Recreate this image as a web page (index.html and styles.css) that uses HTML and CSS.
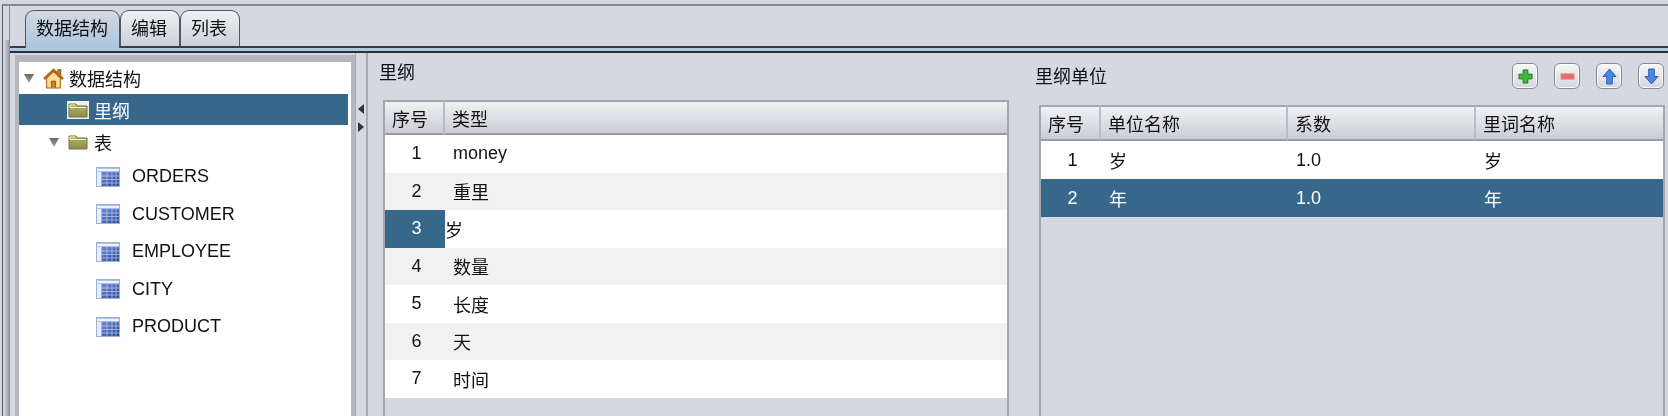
FILE: index.html
```html
<!DOCTYPE html>
<html lang="zh-CN">

<head>
    <meta charset="UTF-8">
    <title>数据结构</title>
    <link rel="stylesheet" href="styles.css">
</head>

<body>
    <svg class="defs" width="0" height="0">
        <defs>
            <linearGradient id="folderFill" x1="0" y1="0" x2="0" y2="1">
                <stop offset="0" stop-color="#b5b46a" />
                <stop offset="1" stop-color="#8e8e45" />
            </linearGradient>
            <linearGradient id="tableFill" x1="0" y1="0" x2="1" y2="1">
                <stop offset="0" stop-color="#86a4ea" />
                <stop offset="1" stop-color="#24428f" />
            </linearGradient>
            <linearGradient id="arrowFill" x1="0" y1="0" x2="0" y2="1">
                <stop offset="0" stop-color="#666" />
                <stop offset="1" stop-color="#a5a5a5" />
            </linearGradient>
            <symbol id="folder" viewBox="0 0 20 16">
                <path d="M1 15 V2 H8 L9.500 4 H19 V15 Z" fill="url(#folderFill)" stroke="#6f7060" />
                <path d="M2 5.500 V3 H7.500 M2 5.500 H18" fill="none" stroke="#fdf7a6" />
            </symbol>
            <symbol id="grid" viewBox="0 0 24 20">
                <rect x="0.500" y="0.500" width="23" height="19" fill="url(#tableFill)" stroke="#9fb2d6" />
                <path d="M1 3 H23" stroke="#eef3fd" stroke-width="3" />
                <path d="M1 5.500 H23" stroke="#5f7fc8" />
                <path d="M6 9 H23 M6 12.500 H23 M6 16 H23 M11 5 V19 M16 1 V19 M20 1 V19" stroke="#d5e0f7" stroke-width=".8" opacity=".75" />
                <path d="M3.250 5 V19" stroke="#e6edfb" stroke-width="4.500" />
            </symbol>
            <symbol id="open" viewBox="0 0 10 10">
                <path d="M0 1 H10 L5 10 Z" fill="url(#arrowFill)" />
            </symbol>
        </defs>
    </svg>

    <div class="window">
        <div class="edge"></div>
        <div class="content">
            <div class="tabbar">
                <div class="tab active">数据结构</div>
                <div class="tab">编辑</div>
                <div class="tab">列表</div>
            </div>
            <div class="band"></div>

            <div class="main">
                <div class="tree-frame">
                    <ul class="tree">
                        <li class="node root">
                            <svg class="arrow"><use href="#open" /></svg>
                            <svg class="home" viewBox="0 0 20 20">
                                <path d="M14 1.500 H17 V8 H14 Z" fill="#c9782a" stroke="#7a4510" stroke-width=".7" />
                                <path d="M3.500 9.500 L10 3.500 L16.500 9.500 V19 H3.500 Z" fill="#ffdf8f" stroke="#a8641a" />
                                <path d="M8 19 V12.500 H12 V19" fill="#d07f2c" stroke="#7a4510" stroke-width=".7" />
                                <path d="M1 10.500 L10 2 L19 10.500" fill="none" stroke="#b5651d" stroke-width="2.400" />
                            </svg>
                            <span>数据结构</span>
                        </li>
                        <li class="node level1 selected">
                            <svg class="folder boxed"><use href="#folder" /></svg>
                            <span>里纲</span>
                        </li>
                        <li class="node group">
                            <svg class="arrow"><use href="#open" /></svg>
                            <svg class="folder"><use href="#folder" /></svg>
                            <span>表</span>
                        </li>
                        <li class="node leaf"><svg class="grid-icon"><use href="#grid" /></svg><span>ORDERS</span></li>
                        <li class="node leaf"><svg class="grid-icon"><use href="#grid" /></svg><span>CUSTOMER</span></li>
                        <li class="node leaf"><svg class="grid-icon"><use href="#grid" /></svg><span>EMPLOYEE</span></li>
                        <li class="node leaf"><svg class="grid-icon"><use href="#grid" /></svg><span>CITY</span></li>
                        <li class="node leaf"><svg class="grid-icon"><use href="#grid" /></svg><span>PRODUCT</span></li>
                    </ul>
                </div>

                <div class="splitter">
                    <span class="nudge left"></span>
                    <span class="nudge right"></span>
                </div>

                <section class="panel panel-left">
                    <div class="panel-head">
                        <h2>里纲</h2>
                    </div>
                    <div class="table-wrap">
                        <table class="data">
                            <colgroup>
                                <col class="col-no">
                                <col>
                            </colgroup>
                            <thead>
                                <tr><th>序号</th><th>类型</th></tr>
                            </thead>
                            <tbody>
                                <tr><td class="no">1</td><td>money</td></tr>
                                <tr><td class="no">2</td><td>重里</td></tr>
                                <tr><td class="no cell-selected">3</td><td class="editing">岁</td></tr>
                                <tr><td class="no">4</td><td>数量</td></tr>
                                <tr><td class="no">5</td><td>长度</td></tr>
                                <tr><td class="no">6</td><td>天</td></tr>
                                <tr><td class="no">7</td><td>时间</td></tr>
                            </tbody>
                        </table>
                    </div>
                </section>

                <section class="panel panel-right">
                    <div class="panel-head with-tools">
                        <h2>里纲单位</h2>
                        <div class="tools">
                            <button class="tool" title="add">
                                <svg viewBox="0 0 16 16"><path d="M5.500 1 H10.500 V5.500 H15 V10.500 H10.500 V15 H5.500 V10.500 H1 V5.500 H5.500 Z" fill="#3cb83c" stroke="#1d7a1d" /></svg>
                            </button>
                            <button class="tool" title="remove">
                                <svg viewBox="0 0 16 16"><rect x="1" y="5" width="14" height="6" fill="#ee6a6a" stroke="#d9a0a0" /></svg>
                            </button>
                            <button class="tool" title="up">
                                <svg viewBox="0 0 16 18"><path d="M8 1 L15 9 H11 V17 H5 V9 H1 Z" fill="#4c86e0" stroke="#2a5cb0" /></svg>
                            </button>
                            <button class="tool" title="down">
                                <svg viewBox="0 0 16 18"><path d="M8 17 L15 9 H11 V1 H5 V9 H1 Z" fill="#4c86e0" stroke="#2a5cb0" /></svg>
                            </button>
                        </div>
                    </div>
                    <div class="table-wrap">
                        <table class="data">
                            <colgroup>
                                <col class="col-no">
                                <col class="col-name">
                                <col class="col-ratio">
                                <col>
                            </colgroup>
                            <thead>
                                <tr><th>序号</th><th>单位名称</th><th>系数</th><th>里词名称</th></tr>
                            </thead>
                            <tbody>
                                <tr><td class="no">1</td><td>岁</td><td>1.0</td><td>岁</td></tr>
                                <tr class="row-selected"><td class="no">2</td><td>年</td><td>1.0</td><td>年</td></tr>
                            </tbody>
                        </table>
                    </div>
                </section>
            </div>
        </div>
    </div>
</body>

</html>
```

FILE: styles.css
```css
html,
body {
    margin: 0;
    padding: 0;
    height: 416px;
    overflow: hidden;
}

body {
    background-color: #d5d8e1;
    color: #111;
    font-family: "Liberation Sans", "Noto Sans CJK SC", sans-serif;
    font-size: 18px;
}

.defs {
    position: absolute;
}

.window {
    height: 412px;
    margin: 4px 0 0 2px;
    box-sizing: border-box;
    display: flex;
    border-top: 2px solid #85888f;
    border-left: 1px solid #5a5d66;
    filter: blur(0.4px);
}

.edge {
    width: 6px;
    flex: none;
    border-right: 1px solid #8a8d95;
    background:
        linear-gradient(#d5d8e1 34px, transparent 34px),
        linear-gradient(90deg, #d0d3da 20%, #9a9da5);
}

.content {
    flex: 1;
    min-width: 0;
    display: flex;
    flex-direction: column;
}

/* tabs */
.tabbar {
    display: flex;
    height: 42px;
    padding: 4px 0 0 15px;
    box-sizing: border-box;
    border-bottom: 2px solid #3a3d47;
}

.tab {
    width: 60px;
    height: 36px;
    padding: 0 0 0 10px;
    line-height: 37px;
    box-sizing: border-box;
    border: 1px solid #4e5763;
    border-bottom: none;
    border-radius: 9px 9px 0 0;
    background: linear-gradient(#eef0f3, #cdd0d8);
}

.tab.active {
    width: 95px;
    height: 38px;
    background: linear-gradient(#d5d8e1, #aac6de);
    position: relative;
    z-index: 1;
}

.band {
    height: 5px;
    background-color: #b1c9de;
    border-bottom: 2px solid #2b2f3b;
    box-sizing: border-box;
}

/* main area */
.main {
    flex: 1;
    display: flex;
    min-height: 0;
}

.tree-frame {
    width: 340px;
    margin: 2px 0 0 5px;
    box-sizing: border-box;
    flex: none;
    border: 4px solid #b4b7bf;
    border-top-width: 7px;
    border-bottom: none;
}

.tree {
    list-style: none;
    margin: 0;
    padding: 0 3px 0 0;
    height: 100%;
    background-color: #fff;
}

.node {
    display: flex;
    align-items: center;
}

.root {
    height: 32px;
    padding-left: 5px;
}

.level1 {
    height: 31px;
    padding-left: 49px;
}

.group {
    height: 33px;
    padding-left: 30px;
}

.leaf {
    height: 37.5px;
    padding-left: 77px;
}

.selected {
    background-color: #37678a;
    color: #fff;
}

.arrow {
    width: 10px;
    height: 10px;
    flex: none;
}

.home {
    width: 21px;
    height: 21px;
    margin: 0 5px 0 9px;
    flex: none;
}

.folder {
    width: 20px;
    height: 16px;
    flex: none;
    margin-right: 6px;
}

.group .folder {
    margin-left: 9px;
}

.boxed {
    background-color: #f1f2e6;
    outline: 1px solid #f1f2e6;
}

.grid-icon {
    width: 24px;
    height: 20px;
    margin-right: 12px;
    flex: none;
}

/* splitter between tree and tables */
.splitter {
    width: 10px;
    flex: none;
    border-left: 1px solid #a7aab2;
    border-right: 2px solid #a7aab2;
    display: flex;
    flex-direction: column;
    align-items: center;
    gap: 8px;
    padding-top: 51px;
}

.nudge {
    width: 0;
    height: 0;
    border-top: 5px solid transparent;
    border-bottom: 5px solid transparent;
}

.nudge.left {
    border-right: 6px solid #333;
}

.nudge.right {
    border-left: 6px solid #333;
}

/* panels */
.panel {
    display: flex;
    flex-direction: column;
    min-height: 0;
}

.panel-left {
    width: 657px;
    padding-left: 11px;
    box-sizing: border-box;
    flex: none;
}

.panel-right {
    flex: 1;
    padding-left: 10px;
    min-width: 0;
}

.panel-head {
    height: 47px;
    flex: none;
    display: flex;
    align-items: flex-start;
}

.panel-head h2 {
    margin: 0;
    font-size: 18px;
    font-weight: normal;
    line-height: 40px;
}

.with-tools {
    height: 52px;
    justify-content: space-between;
    padding-top: 10px;
    box-sizing: border-box;
}

.with-tools h2 {
    line-height: 26px;
    margin-top: 1px;
}

.tools {
    display: flex;
    gap: 16px;
    margin-right: 4px;
}

.tool {
    width: 26px;
    height: 26px;
    padding: 0;
    border: 1px solid #85888f;
    border-radius: 6px;
    background: linear-gradient(#f6f7f8, #d3d6dc);
    box-shadow: inset 0 0 0 1px #fff;
    display: flex;
    align-items: center;
    justify-content: center;
}

.tool svg {
    width: 15px;
    height: 17px;
}

.table-wrap {
    flex: 1;
    margin: 0 16px 0 4px;
    border-left: 2px solid #a4a7af;
    border-right: 2px solid #a4a7af;
}

.panel-right .table-wrap {
    margin: 0 3px 0 4px;
}

.data {
    width: 100%;
    table-layout: fixed;
    border-collapse: separate;
    border-spacing: 0;
}

.col-no {
    width: 60px;
}

.col-name {
    width: 187px;
}

.col-ratio {
    width: 188px;
}

.data th {
    height: 35px;
    padding: 0 0 0 7px;
    box-sizing: border-box;
    text-align: left;
    font-weight: normal;
    background: linear-gradient(#f0f1f4, #cacdd5);
    border-top: 2px solid #a4a7af;
    border-bottom: 2px solid #9a9da5;
    border-right: 2px solid #b9bcc4;
}

.data th:last-child {
    border-right: none;
}

.panel-right .data th {
    height: 36px;
}

.data tbody tr {
    background-color: #fff;
}

.data tbody tr:nth-child(even) {
    background-color: #f1f1f1;
}

.data td {
    height: 37.5px;
    padding: 0 0 0 8px;
    box-sizing: border-box;
}

.panel-right .data td {
    height: 38px;
}

.data td.no {
    padding: 0 0 0 3px;
    text-align: center;
}

.data tbody tr.row-selected {
    background-color: #37678a;
    color: #fff;
}

.data td.cell-selected {
    background-color: #37678a;
    color: #fff;
}

.data td.editing {
    padding-left: 0;
}
```
